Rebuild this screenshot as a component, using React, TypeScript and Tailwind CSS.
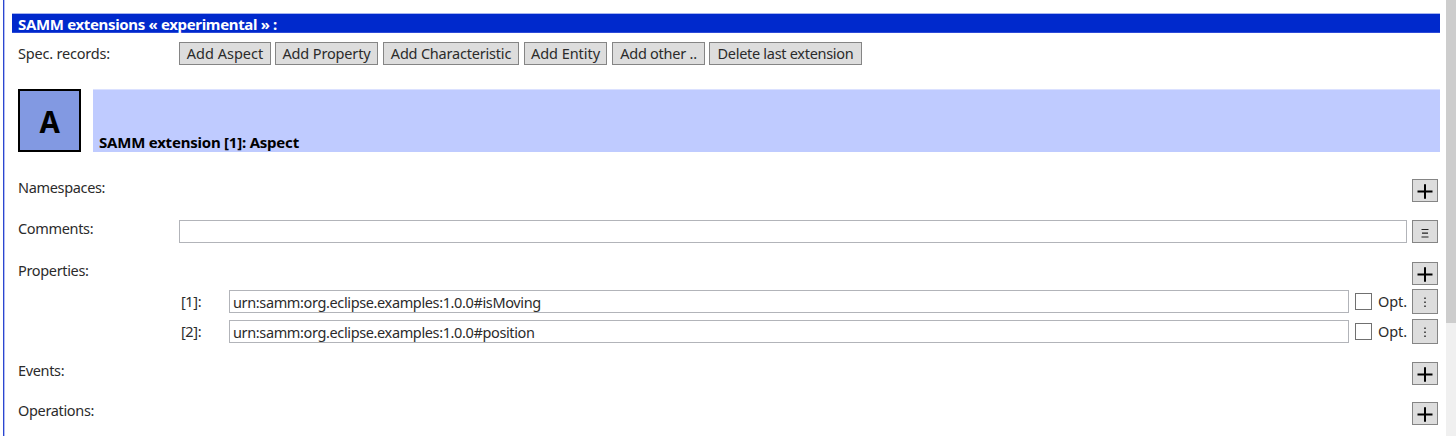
import type { ReactNode } from "react";

const boxButton = "flex shrink-0 items-center justify-center border border-[#858585] bg-[#dddddd]";

const recordButtons = [
  { label: "Add Aspect", size: "w-[92px] mr-[4px] tracking-[0px]" },
  { label: "Add Property", size: "w-[103px] mr-[5px] tracking-[-0.15px]" },
  { label: "Add Characteristic", size: "w-[136px] mr-[5px] tracking-[-0.2px]" },
  { label: "Add Entity", size: "w-[83px] mr-[5px] tracking-[-0.05px]" },
  { label: "Add other ..", size: "w-[93px] mr-[4px] tracking-[-0.25px]" },
  { label: "Delete last extension", size: "w-[153px] tracking-[-0.29px]" },
];

const properties = [
  { index: "[1]:", urn: "urn:samm:org.eclipse.examples:1.0.0#isMoving" },
  { index: "[2]:", urn: "urn:samm:org.eclipse.examples:1.0.0#position" },
];

function PlusButton() {
  return (
    <button className={`${boxButton} h-[23px] w-[26px]`} aria-label="Add">
      <svg width="16" height="16" viewBox="0 0 16 16" className="translate-y-[0.5px]">
        <path d="M0.5 8H15.5M8 0.8V15.2" stroke="#000" strokeWidth="2" fill="none" />
      </svg>
    </button>
  );
}

function Row({ label, className, children }: { label: string; className: string; children: ReactNode }) {
  return (
    <div className={`flex shrink-0 items-start pr-[2px] ${className}`}>
      <span className="-mt-[4px] w-[161px] shrink-0 leading-[24px] tracking-[-0.34px]">{label}</span>
      {children}
    </div>
  );
}

export default function App() {
  return (
    <div className="flex h-[436px] w-[1456px] overflow-hidden bg-white font-['Noto_Sans','Open_Sans',sans-serif] text-[14.5px] text-[#2b2b2b]">
      <div className="ml-[3px] w-px shrink-0 bg-[#2b46d0]" />
      <div className="w-px shrink-0 bg-[#b3bdf0]" />
      <main className="ml-[7px] flex w-[1428px] shrink-0 flex-col pt-[13px]">
        <h1 className="flex h-[20px] shrink-0 items-center border-t border-b border-t-[#a6b4f0] border-b-[#2c4ad8] bg-[#0029cc] pt-px pl-[6px] text-[15px] leading-[18px] font-bold tracking-[-0.34px] whitespace-pre text-white">
          SAMM extensions « experimental » :
        </h1>

        <div className="mt-[9px] flex h-[23px] shrink-0 items-center pl-[6px]">
          <span className="w-[161px] shrink-0 pt-px tracking-[-0.2px]">Spec. records:</span>
          {recordButtons.map(({ label, size }) => (
            <button key={label} className={`${boxButton} h-[23px] pt-px whitespace-nowrap ${size}`}>
              {label}
            </button>
          ))}
        </div>

        <div className="mt-[24px] flex h-[63px] shrink-0 pl-[6px]">
          <div className="flex w-[63px] items-center justify-center border-2 border-black bg-[#8299e2] pt-[2px] text-[31px] font-bold text-black">
            <span className="scale-x-95">A</span>
          </div>
          <div className="ml-[12px] flex flex-1 items-end border-t border-t-[#dbe1ff] bg-[#bfcbff] pl-[6px] text-[15px] leading-[19px] font-bold tracking-[-0.22px] text-black">
            SAMM extension [1]: Aspect
          </div>
        </div>

        <div className="flex flex-col pl-[6px]">
          <Row label="Namespaces:" className="mt-[27px] h-[23px] justify-between">
            <PlusButton />
          </Row>
          <Row label="Comments:" className="mt-[18px] h-[23px]">
            <input className="h-[23px] w-[1228px] border border-[#b2b4b9] bg-white" readOnly aria-label="Comments" />
            <button className={`${boxButton} ml-[5px] h-[23px] w-[26px]`} aria-label="Edit">
              <svg width="8" height="10" viewBox="0 0 8 10" className="translate-y-[1.5px]">
                <path d="M0.5 1H7.5M1 4.7H7M0.5 8.5H7.5" stroke="#222" strokeWidth="1.2" fill="none" />
              </svg>
            </button>
          </Row>
          <Row label="Properties:" className="mt-[19px] h-[23px] justify-between">
            <PlusButton />
          </Row>
          <div className="mt-[4px] flex flex-col gap-[5px] pl-[163px]">
            {properties.map(({ index, urn }) => (
              <div key={index} className="flex h-[25px] items-center">
                <span className="w-[48px] shrink-0 tracking-[-0.4px]">{index}</span>
                <div className="flex h-[23px] w-[1120px] shrink-0 items-center border border-[#b2b4b9] bg-white pt-[2px] pl-[3px]">
                  <span className="tracking-[-0.37px]">{urn}</span>
                </div>
                <span className="ml-[6px] h-[17px] w-[17px] shrink-0 border border-[#707070] bg-white" />
                <span className="ml-[6px] w-[34px] shrink-0 tracking-[-0.1px]">Opt.</span>
                <button className={`${boxButton} h-[25px] w-[26px]`} aria-label="Menu">
                  <svg width="4" height="14" viewBox="0 0 4 14">
                    <path d="M1 2.5H3V4H1ZM1 6.5H3V8H1ZM1 10.5H3V12H1Z" fill="#555" />
                  </svg>
                </button>
              </div>
            ))}
          </div>
          <Row label="Events:" className="mt-[18px] h-[23px] justify-between">
            <PlusButton />
          </Row>
          <Row label="Operations:" className="mt-[17px] h-[23px] justify-between">
            <PlusButton />
          </Row>
        </div>
      </main>
      <div className="ml-[6px] w-[10px] shrink-0 bg-[#f0f0f0]">
        <div className="h-[323px] bg-[#cdcdcd]" />
      </div>
    </div>
  );
}
